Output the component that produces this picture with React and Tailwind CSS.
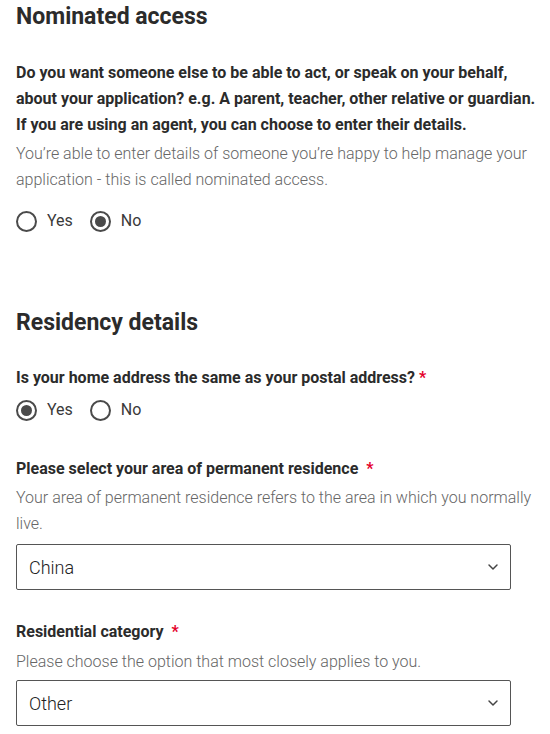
import { ChevronDown } from "lucide-react";

function Radio({ label, checked }) {
  return (
    <label className="flex items-center gap-[10px] cursor-pointer">
      <span className="w-[21px] h-[21px] rounded-full border-2 border-[#4a4a4a] flex items-center justify-center bg-white">
        {checked && <span className="w-[11px] h-[11px] rounded-full bg-[#4a4a4a]" />}
      </span>
      <span className="text-[16px] text-[#3a3a3a]">{label}</span>
    </label>
  );
}

function Select({ value }) {
  return (
    <div className="w-[495px] h-[46px] border border-[#555] rounded-[2px] flex items-center justify-between pl-3 pr-[9px] bg-white">
      <span className="text-[18px] font-light text-[#222]">{value}</span>
      <ChevronDown size={16} strokeWidth={2.2} className="text-[#444]" />
    </div>
  );
}

export default function App() {
  return (
    <div className="bg-white min-h-screen pl-4 pr-2 font-['Roboto',sans-serif] text-[#333]">
      {/* NOMINATED ACCESS */}
      <h2 className="text-[23px] font-bold leading-[34px] text-[#2b2b2b]">Nominated access</h2>
      <p className="mt-[26px] text-[16px] font-bold leading-[26px] text-[#2b2b2b]">
        Do you want someone else to be able to act, or speak on your behalf, about your application? e.g. A parent, teacher, other relative or guardian. If you are using an agent, you can choose to enter their details.
      </p>
      <p className="mt-[3px] text-[16px] font-light leading-[26px] text-[#666]">
        You’re able to enter details of someone you’re happy to help manage your application - this is called nominated access.
      </p>
      <div className="flex gap-[17px] mt-[16px]">
        <Radio label="Yes" />
        <Radio label="No" checked />
      </div>

      {/* RESIDENCY DETAILS */}
      <h2 className="mt-[73px] text-[23px] font-bold leading-[34px] text-[#2b2b2b]">Residency details</h2>
      <p className="mt-[25px] text-[16px] font-bold leading-[26px] text-[#2b2b2b]">
        Is your home address the same as your postal address?<span className="text-[#e4002b] ml-1">*</span>
      </p>
      <div className="flex gap-[17px] mt-[7px]">
        <Radio label="Yes" checked />
        <Radio label="No" />
      </div>

      <p className="mt-[34px] text-[16px] font-bold leading-[26px] text-[#2b2b2b]">
        Please select your area of permanent residence<span className="text-[#e4002b] ml-2">*</span>
      </p>
      <p className="mt-[3px] text-[16px] font-light leading-[26px] text-[#666]">
        Your area of permanent residence refers to the area in which you normally live.
      </p>
      <div className="mt-[7px]">
        <Select value="China" />
      </div>

      <p className="mt-[29px] text-[16px] font-bold leading-[26px] text-[#2b2b2b]">
        Residential category<span className="text-[#e4002b] ml-2">*</span>
      </p>
      <p className="mt-[4px] text-[16px] font-light leading-[26px] text-[#666]">
        Please choose the option that most closely applies to you.
      </p>
      <div className="mt-[5px]">
        <Select value="Other" />
      </div>
    </div>
  );
}
